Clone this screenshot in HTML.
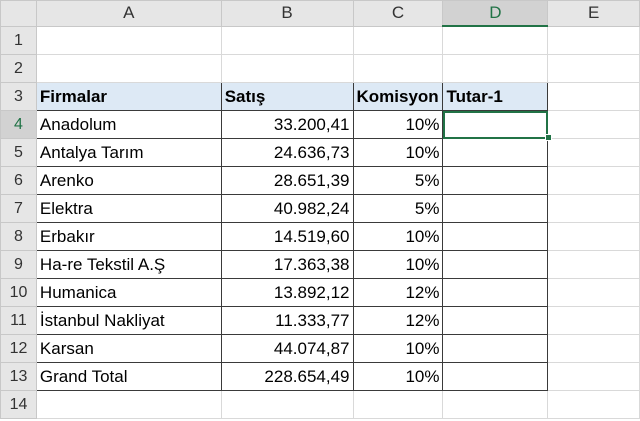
<!DOCTYPE html>
<html><head><meta charset="utf-8"><style>
body{margin:0;width:640px;height:421px;overflow:hidden;background:#fff;font-family:"Liberation Sans",Arial,sans-serif;}
table{border-collapse:collapse;table-layout:fixed;position:absolute;left:0;top:0;}
td{border:1px solid #d9d9d9;height:27px;padding:0 3px;font-size:17px;color:#000;white-space:nowrap;overflow:hidden;line-height:27px;}
tr.h td{height:24px;line-height:24px;background:#e6e6e6;border-color:#c8c8c8;text-align:center;color:#333;font-size:17px;}
td.r{background:#e6e6e6;border-color:#c8c8c8;text-align:center;color:#333;padding:0;font-size:16px;}
td.rs{background:#d2d2d2;color:#217346;}
tr.h td.sel{background:#d2d2d2;color:#217346;border-bottom:2px solid #217346;}
.t{border:1px solid #3a3a3a;}
.hd{background:#dde9f5;font-weight:bold;}
.n{text-align:right;}
.active{outline:2px solid #217346;outline-offset:-2px;}
</style></head><body>
<table>
<colgroup><col style="width:36px"><col style="width:185px"><col style="width:132px"><col style="width:90px"><col style="width:105px"><col style="width:92px"></colgroup>
<tr class="h"><td></td><td>A</td><td>B</td><td>C</td><td class="sel">D</td><td>E</td></tr>
<tr><td class="r">1</td><td></td><td></td><td></td><td></td><td></td></tr>
<tr><td class="r">2</td><td></td><td></td><td></td><td></td><td></td></tr>
<tr><td class="r">3</td><td class="t hd">Firmalar</td><td class="t hd">Satış</td><td class="t hd">Komisyon</td><td class="t hd">Tutar-1</td><td></td></tr>
<tr><td class="r rs">4</td><td class="t">Anadolum</td><td class="t n">33.200,41</td><td class="t n">10%</td><td class="t active"></td><td></td></tr>
<tr><td class="r">5</td><td class="t">Antalya Tarım</td><td class="t n">24.636,73</td><td class="t n">10%</td><td class="t"></td><td></td></tr>
<tr><td class="r">6</td><td class="t">Arenko</td><td class="t n">28.651,39</td><td class="t n">5%</td><td class="t"></td><td></td></tr>
<tr><td class="r">7</td><td class="t">Elektra</td><td class="t n">40.982,24</td><td class="t n">5%</td><td class="t"></td><td></td></tr>
<tr><td class="r">8</td><td class="t">Erbakır</td><td class="t n">14.519,60</td><td class="t n">10%</td><td class="t"></td><td></td></tr>
<tr><td class="r">9</td><td class="t">Ha-re Tekstil A.Ş</td><td class="t n">17.363,38</td><td class="t n">10%</td><td class="t"></td><td></td></tr>
<tr><td class="r">10</td><td class="t">Humanica</td><td class="t n">13.892,12</td><td class="t n">12%</td><td class="t"></td><td></td></tr>
<tr><td class="r">11</td><td class="t">İstanbul Nakliyat</td><td class="t n">11.333,77</td><td class="t n">12%</td><td class="t"></td><td></td></tr>
<tr><td class="r">12</td><td class="t">Karsan</td><td class="t n">44.074,87</td><td class="t n">10%</td><td class="t"></td><td></td></tr>
<tr><td class="r">13</td><td class="t">Grand Total</td><td class="t n">228.654,49</td><td class="t n">10%</td><td class="t"></td><td></td></tr>
<tr><td class="r">14</td><td></td><td></td><td></td><td></td><td></td></tr>
</table>
<div style="position:absolute;left:545px;top:134px;width:5px;height:5px;background:#217346;border:1px solid #fff;"></div>
</body></html>
